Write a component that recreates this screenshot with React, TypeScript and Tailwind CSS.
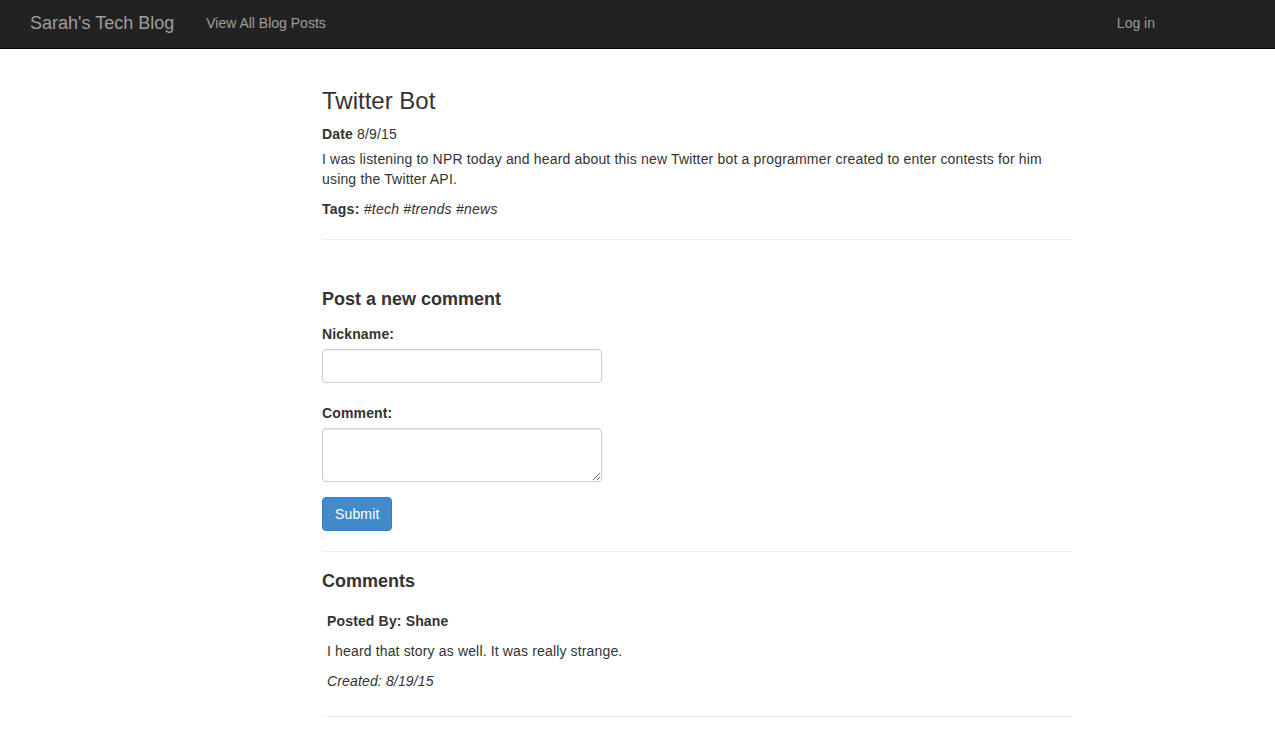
import React from "react";

const font = { fontFamily: '"Liberation Sans", Arial, Helvetica, sans-serif' };

export default function App() {
  return (
    <div className="min-h-[729px] bg-white text-[14px] leading-[20px] tracking-[0.15px] text-[#333]" style={font}>
      <nav className="flex h-[49px] items-center border-b border-[#080808] bg-[#222] pb-[2px] tracking-normal">
        <a className="ml-[30px] text-[18px] leading-[20px] text-[#9d9d9d]">Sarah's Tech Blog</a>
        <a className="ml-[32px] text-[14px] text-[#9d9d9d]">View All Blog Posts</a>
        <a className="ml-auto mr-[120px] text-[14px] text-[#9d9d9d]">Log in</a>
      </nav>

      <main className="ml-[322px] w-[750px]">
        <h3 className="mt-[39px] mb-[10px] text-[24px] leading-[26.4px] font-normal tracking-normal">Twitter Bot</h3>
        <p className="mb-[5px]">
          <strong>Date</strong> 8/9/15
        </p>
        <p className="mb-[10px] tracking-[0.17px]">
          I was listening to NPR today and heard about this new Twitter bot a programmer created to enter contests
          for him using the Twitter API.
        </p>
        <p className="tracking-[0.25px]">
          <strong>Tags:</strong> <em>#tech #trends #news</em>
        </p>
        <hr className="mt-[20px] border-t border-[#eee]" />

        <h4 className="mt-[49px] text-[18px] leading-[20px] font-bold tracking-normal">Post a new comment</h4>
        <form className="mt-[15px]">
          <label className="block font-bold">Nickname:</label>
          <input
            type="text"
            className="mt-[5px] block h-[34px] w-[280px] rounded-[4px] border border-[#ccc] px-3 shadow-[inset_0_1px_1px_rgba(0,0,0,0.075)] outline-none"
          />
          <label className="mt-[20px] block font-bold">Comment:</label>
          <textarea className="mt-[5px] block h-[54px] w-[280px] rounded-[4px] border border-[#ccc] px-3 py-1.5 shadow-[inset_0_1px_1px_rgba(0,0,0,0.075)] outline-none" />
          <button
            type="button"
            className="mt-[15px] h-[34px] rounded-[4px] border border-[#357ebd] bg-[#428bca] px-3 text-white"
          >
            Submit
          </button>
        </form>
        <hr className="mt-[20px] border-t border-[#eee]" />

        <h4 className="mt-[19px] text-[18px] leading-[20px] font-bold tracking-normal">Comments</h4>
        <div className="mt-[20px] pl-[5px]">
          <p className="font-bold">Posted By: Shane</p>
          <p className="mt-[10px]">I heard that story as well. It was really strange.</p>
          <p className="mt-[10px] italic">Created: 8/19/15</p>
        </div>
        <hr className="mt-[25px] border-t border-[#eee]" />
      </main>
    </div>
  );
}
